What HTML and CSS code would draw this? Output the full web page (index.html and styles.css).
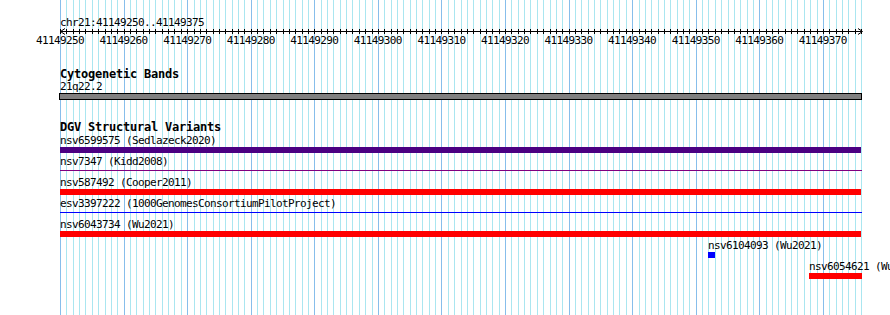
FILE: index.html
```html
<!DOCTYPE html>
<html>
<head>
<meta charset="utf-8">
<title>Genome view</title>
<link rel="stylesheet" href="styles.css">
</head>
<body>
<div class="view">
  <div class="gridlines" id="gridlines"></div>
  <div class="content">
    <div class="locus">chr21:41149250..41149375</div>
    <div class="ruler">
      <div class="ticks" id="ticks"></div>
      <svg class="arrow arrow-left" width="6" height="7" viewBox="0 0 6 7"><path d="M5 0.5L0.5 3.5L5 6.5" fill="none" stroke="#000" stroke-width="1"/></svg>
      <svg class="arrow arrow-right" width="6" height="7" viewBox="0 0 6 7"><path d="M1 0.5L5.5 3.5L1 6.5" fill="none" stroke="#000" stroke-width="1"/></svg>
    </div>
    <div class="ruler-labels">
      <div class="lbl"><span>41149250</span></div>
      <div class="lbl"><span>41149260</span></div>
      <div class="lbl"><span>41149270</span></div>
      <div class="lbl"><span>41149280</span></div>
      <div class="lbl"><span>41149290</span></div>
      <div class="lbl"><span>41149300</span></div>
      <div class="lbl"><span>41149310</span></div>
      <div class="lbl"><span>41149320</span></div>
      <div class="lbl"><span>41149330</span></div>
      <div class="lbl"><span>41149340</span></div>
      <div class="lbl"><span>41149350</span></div>
      <div class="lbl"><span>41149360</span></div>
      <div class="lbl"><span>41149370</span></div>
    </div>

    <div class="track track-cyto">
      <div class="track-title">Cytogenetic Bands</div>
      <div class="feat-label">21q22.2</div>
      <div class="band"></div>
    </div>

    <div class="track track-dgv">
      <div class="track-title">DGV Structural Variants</div>
      <div class="feature">
        <div class="feat-label">nsv6599575 (Sedlazeck2020)</div>
        <div class="glyph"><div class="bar bar-indigo"></div></div>
      </div>
      <div class="feature">
        <div class="feat-label">nsv7347 (Kidd2008)</div>
        <div class="glyph glyph-line"><div class="line line-purple"></div></div>
      </div>
      <div class="feature">
        <div class="feat-label">nsv587492 (Cooper2011)</div>
        <div class="glyph"><div class="bar bar-red"></div></div>
      </div>
      <div class="feature">
        <div class="feat-label">esv3397222 (1000GenomesConsortiumPilotProject)</div>
        <div class="glyph glyph-line"><div class="line line-blue"></div></div>
      </div>
      <div class="feature">
        <div class="feat-label">nsv6043734 (Wu2021)</div>
        <div class="glyph"><div class="bar bar-red"></div></div>
      </div>
      <div class="feature" style="margin-left: 648px;">
        <div class="feat-label">nsv6104093 (Wu2021)</div>
        <div class="glyph"><div class="bar bar-blue" style="width: 7px;"></div></div>
      </div>
      <div class="feature" style="margin-left: 749px;">
        <div class="feat-label">nsv6054621 (Wu2021)</div>
        <div class="glyph"><div class="bar bar-red" style="width: 53px;"></div></div>
      </div>
    </div>
  </div>
</div>
<script src="script.js"></script>
</body>
</html>
```

FILE: styles.css
```css
html, body {
  margin: 0;
  padding: 0;
  background: #fff;
}

body {
  font-family: "DejaVu Sans Mono", "Liberation Mono", monospace;
  font-size: 11px;
  letter-spacing: -0.62px;
  color: #000;
}

.view {
  position: relative;
  width: 890px;
  height: 315px;
  overflow: hidden;
  background: #fff;
}

.gridlines {
  position: absolute;
  left: 60px;
  top: 0;
  width: 801px;
  height: 315px;
  display: grid;
  grid-template-columns: repeat(126, 1fr);
  border-right: 1px solid #aae6f0;
}

.gridlines .cell {
  border-left: 1px solid #aae6f0;
}

.gridlines .cell.major {
  border-left-color: #87beeb;
}

.content {
  position: relative;
  padding-top: 17px;
}

.locus {
  margin-left: 60px;
  line-height: 11px;
  height: 11px;
  white-space: nowrap;
}

.ruler {
  position: relative;
  margin-left: 60px;
  width: 801px;
  height: 7px;
}

.ruler::before {
  content: "";
  position: absolute;
  left: 0;
  right: -1px;
  top: 3px;
  height: 1px;
  background: #000;
}

.ticks {
  position: relative;
  top: 1px;
  height: 5px;
  display: grid;
  grid-template-columns: repeat(126, 1fr);
  border-right: 1px solid #000;
  width: 801px;
}

.ticks .tick {
  border-left: 1px solid #000;
}

.arrow {
  position: absolute;
  top: 0;
  display: block;
}

.arrow-left {
  left: 0;
}

.arrow-right {
  right: -2px;
}

.ruler-labels {
  display: flex;
  margin-left: 60px;
  line-height: 11px;
  height: 11px;
}

.lbl {
  flex: 0 0 63.57px;
  width: 63.57px;
}

.lbl span {
  display: block;
  width: 48px;
  margin-left: -24px;
  text-align: center;
  white-space: nowrap;
}

.track {
  margin-left: 60px;
}

.track-title {
  font-weight: bold;
  font-size: 12px;
  letter-spacing: -0.22px;
  line-height: 11px;
  height: 11px;
  white-space: nowrap;
}

.track-cyto {
  margin-top: 23px;
}

.feat-label {
  line-height: 11px;
  height: 11px;
  white-space: nowrap;
}

.track-cyto .feat-label {
  margin-top: 1px;
}

.band {
  margin-top: 1px;
  margin-left: -1px;
  width: 801px;
  height: 5px;
  background: #808080;
  border: 1px solid #000;
}

.track-dgv {
  margin-top: 22px;
}

.track-dgv .track-title {
  margin-bottom: 2px;
}

.feature {
  height: 21px;
}

.feature .feat-label {
  margin-bottom: 1px;
}

.glyph {
  height: 6px;
}

.glyph-line {
  padding-top: 2px;
  height: 4px;
}

.bar {
  width: 801px;
  height: 6px;
}

.bar-indigo {
  background: #4b0082;
}

.bar-red {
  background: #ff0000;
}

.bar-blue {
  background: #0000ff;
}

.line {
  width: 802px;
  height: 1px;
}

.line-purple {
  background: #800080;
}

.line-blue {
  background: #0000ff;
}
```

FILE: script.js
```js
(function () {
  var grid = document.getElementById('gridlines');
  var ticks = document.getElementById('ticks');
  for (var i = 0; i < 126; i++) {
    var c = document.createElement('div');
    c.className = 'cell' + (i % 10 === 0 ? ' major' : '');
    grid.appendChild(c);
    var t = document.createElement('div');
    t.className = 'tick';
    ticks.appendChild(t);
  }
})();
```
